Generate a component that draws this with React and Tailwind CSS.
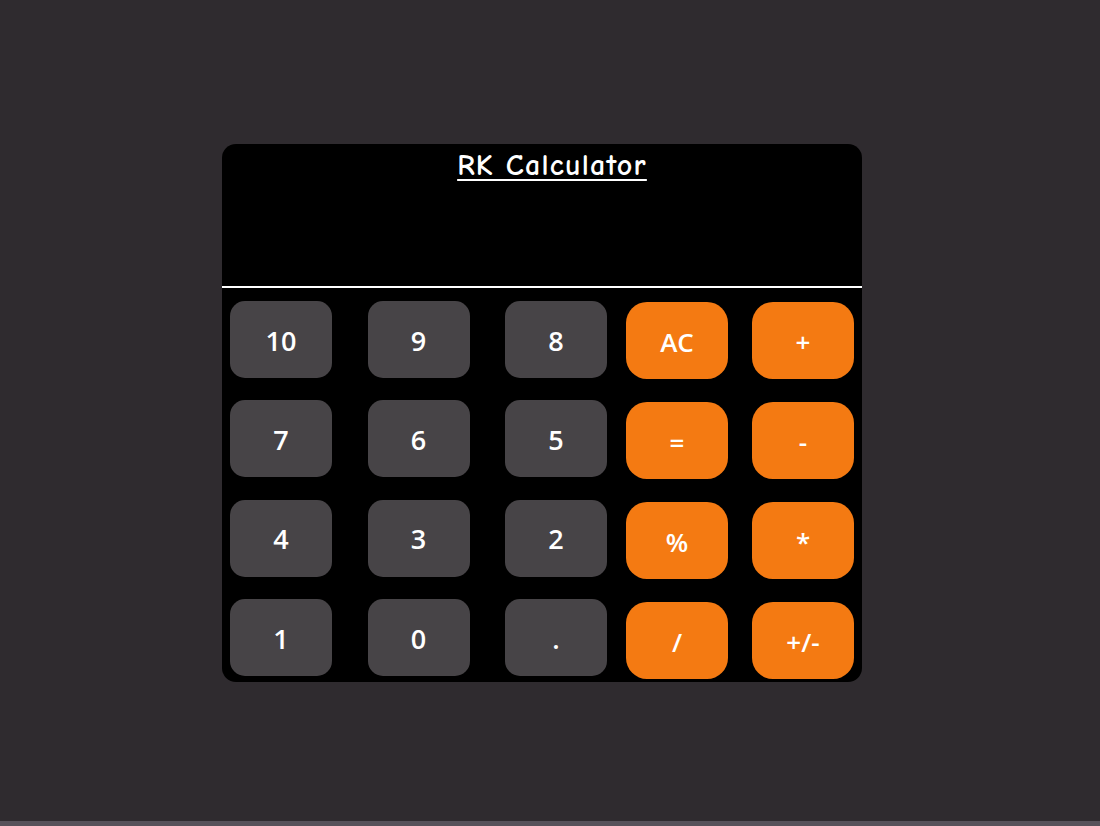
import React from "react";

const gray = ["10", "9", "8", "7", "6", "5", "4", "3", "2", "1", "0", "."];
const ops = ["AC", "+", "=", "-", "%", "*", "/", "+/-"];

export default function App() {
  return (
    <div className="w-[1100px] h-[826px] bg-[#2f2b2f] flex flex-col">
      <div className="flex-1 pt-[144px] pl-[222px]">
        <div className="w-[640px] h-[538px] bg-black rounded-[14px] overflow-hidden flex flex-col">
          <div className="h-[144px] border-b-2 border-white flex justify-center pl-[20px] pt-[2px]">
            <span
              className="text-white text-[30px] leading-[40px] font-semibold tracking-[1.2px] underline underline-offset-[4px] decoration-[2px]"
              style={{ fontFamily: '"Comic Sans MS", "Comic Neue", Lato, sans-serif' }}
            >
              RK Calculator
            </span>
          </div>
          <div
            className="flex items-start pt-[13px] pl-[8px]"
            style={{ fontFamily: '"Open Sans", "Noto Sans", sans-serif' }}
          >
            <div className="grid grid-cols-[102px_102px_102px] gap-x-[35.5px] gap-y-[22.3px]">
              {gray.map((k) => (
                <button
                  key={k}
                  className="w-[102px] h-[77px] rounded-[15px] bg-[#474447] text-white text-[27px] font-semibold flex items-center justify-center pt-[3px]"
                >
                  {k}
                </button>
              ))}
            </div>
            <div className="grid grid-cols-[102px_102px] gap-x-[24px] gap-y-[23px] ml-[19px] pt-[1px]">
              {ops.map((k) => (
                <button
                  key={k}
                  className="w-[102px] h-[77px] rounded-[21px] bg-[#f47a12] text-white text-[26px] font-semibold flex items-center justify-center pt-[3px]"
                >
                  {k}
                </button>
              ))}
            </div>
          </div>
        </div>
      </div>
      <div className="h-[5px] bg-[#57525a]" />
    </div>
  );
}
